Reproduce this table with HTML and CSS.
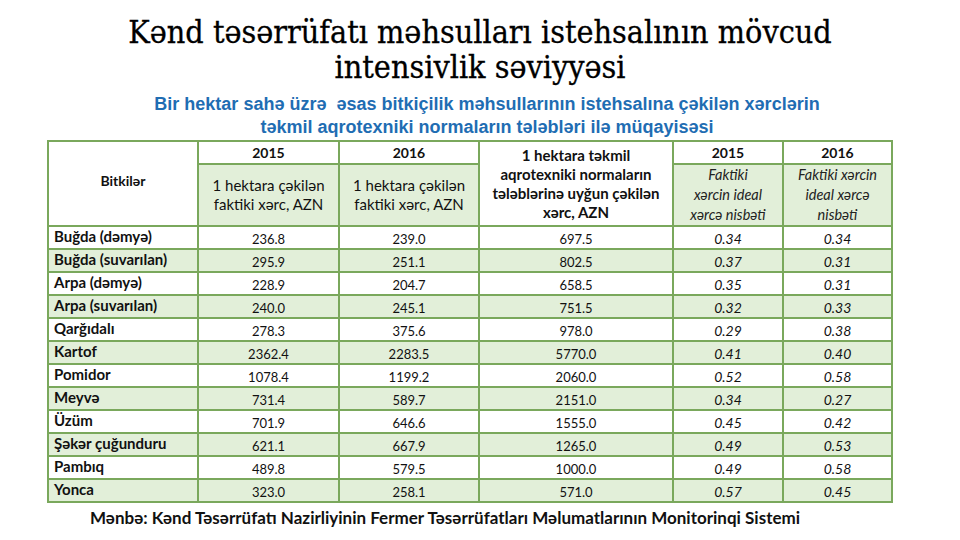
FILE: index.html
```html
<!DOCTYPE html>
<html lang="az">
<head>
<meta charset="utf-8">
<title>Kənd təsərrüfatı məhsulları istehsalının mövcud intensivlik səviyyəsi</title>
<link rel="stylesheet" href="styles.css">
</head>
<body>
<div class="slide">
  <h1 class="title">Kənd təsərrüfatı məhsulları istehsalının mövcud<br>intensivlik səviyyəsi</h1>
  <p class="subtitle">Bir hektar sahə üzrə&nbsp; əsas bitkiçilik məhsullarının istehsalına çəkilən xərclərin<br>təkmil aqrotexniki normaların tələbləri ilə müqayisəsi</p>
  <table class="data">
    <colgroup>
      <col class="c1"><col class="c2"><col class="c3"><col class="c4"><col class="c5"><col class="c6">
    </colgroup>
    <thead>
      <tr class="h1">
        <th rowspan="2" class="crop-head">Bitkilər</th>
        <th>2015</th>
        <th>2016</th>
        <th rowspan="2" class="norm-head">1 hektara təkmil<br>aqrotexniki normaların<br>tələblərinə uyğun çəkilən<br>xərc, AZN</th>
        <th>2015</th>
        <th>2016</th>
      </tr>
      <tr class="h2">
        <td class="sub">1 hektara çəkilən<br>faktiki xərc, AZN</td>
        <td class="sub">1 hektara çəkilən<br>faktiki xərc, AZN</td>
        <td class="sub ital">Faktiki<br>xərcin ideal<br>xərcə nisbəti</td>
        <td class="sub ital">Faktiki xərcin<br>ideal xərcə<br>nisbəti</td>
      </tr>
    </thead>
    <tbody>
      <tr><th>Buğda (dəmyə)</th><td>236.8</td><td>239.0</td><td>697.5</td><td class="r">0.34</td><td class="r">0.34</td></tr>
      <tr class="g"><th>Buğda (suvarılan)</th><td>295.9</td><td>251.1</td><td>802.5</td><td class="r">0.37</td><td class="r">0.31</td></tr>
      <tr><th>Arpa (dəmyə)</th><td>228.9</td><td>204.7</td><td>658.5</td><td class="r">0.35</td><td class="r">0.31</td></tr>
      <tr class="g"><th>Arpa (suvarılan)</th><td>240.0</td><td>245.1</td><td>751.5</td><td class="r">0.32</td><td class="r">0.33</td></tr>
      <tr><th>Qarğıdalı</th><td>278.3</td><td>375.6</td><td>978.0</td><td class="r">0.29</td><td class="r">0.38</td></tr>
      <tr class="g"><th>Kartof</th><td>2362.4</td><td>2283.5</td><td>5770.0</td><td class="r">0.41</td><td class="r">0.40</td></tr>
      <tr><th>Pomidor</th><td>1078.4</td><td>1199.2</td><td>2060.0</td><td class="r">0.52</td><td class="r">0.58</td></tr>
      <tr class="g"><th>Meyvə</th><td>731.4</td><td>589.7</td><td>2151.0</td><td class="r">0.34</td><td class="r">0.27</td></tr>
      <tr><th>Üzüm</th><td>701.9</td><td>646.6</td><td>1555.0</td><td class="r">0.45</td><td class="r">0.42</td></tr>
      <tr class="g"><th>Şəkər çuğunduru</th><td>621.1</td><td>667.9</td><td>1265.0</td><td class="r">0.49</td><td class="r">0.53</td></tr>
      <tr><th>Pambıq</th><td>489.8</td><td>579.5</td><td>1000.0</td><td class="r">0.49</td><td class="r">0.58</td></tr>
      <tr class="g"><th>Yonca</th><td>323.0</td><td>258.1</td><td>571.0</td><td class="r">0.57</td><td class="r">0.45</td></tr>
    </tbody>
  </table>
  <p class="source">Mənbə: Kənd Təsərrüfatı Nazirliyinin Fermer Təsərrüfatları Məlumatlarının Monitorinqi Sistemi</p>
</div>
</body>
</html>
```
FILE: styles.css
```css
html, body {
  margin: 0;
  padding: 0;
  background: #ffffff;
}

.slide {
  width: 960px;
  height: 540px;
  display: flex;
  flex-direction: column;
  align-items: flex-start;
  overflow: hidden;
}

.title {
  align-self: stretch;
  margin: 15px 0 0 0;
  font-family: "DejaVu Serif Condensed", "DejaVu Serif", serif;
  font-weight: normal;
  font-size: 32px;
  line-height: 35px;
  text-align: center;
  color: #000000;
  -webkit-text-stroke: 0.3px #000000;
}

.subtitle {
  align-self: stretch;
  margin: 8px 0 0 14px;
  font-family: "Liberation Sans", Arial, sans-serif;
  font-weight: bold;
  font-size: 18px;
  line-height: 23px;
  text-align: center;
  color: #1f6db3;
}

.data {
  margin: 1px 0 0 47px;
  border-collapse: collapse;
  border: 2px solid #7aa85c;
  table-layout: fixed;
  width: 844px;
  font-family: Lato, "Open Sans", sans-serif;
  font-size: 13px;
  color: #111111;
}

.c1 { width: 150px; }
.c2 { width: 141px; }
.c3 { width: 140px; }
.c4 { width: 194px; }
.c5 { width: 110px; }
.c6 { width: 109px; }

.data th,
.data td {
  border: 2px solid #7aa85c;
  padding: 0;
  text-align: center;
  vertical-align: middle;
}

.data thead th {
  font-weight: bold;
  font-size: 14px;
  background: #ffffff;
}

.h1 { height: 23px; }
.h2 { height: 56px; }

.data thead th.crop-head {
  padding-bottom: 6px;
}

.data thead th.norm-head {
  font-size: 15px;
  line-height: 19px;
  padding-top: 1px;
}

.sub {
  background: #e2efd9;
  font-size: 15px;
  line-height: 19px;
  padding-top: 6px;
}

.sub.ital {
  font-style: italic;
  font-size: 14.5px;
  line-height: 20px;
  padding-top: 0;
  color: #222222;
}

.data tbody tr {
  height: 23px;
  background: #ffffff;
}

.data tbody tr.g {
  background: #e2efd9;
}

.data tbody th {
  text-align: left;
  font-weight: bold;
  font-size: 15px;
  padding: 0 0 3px 5px;
  white-space: nowrap;
}

.data tbody td {
  padding-top: 2px;
}

.data tbody td.r {
  font-style: italic;
  font-size: 14px;
}

.source {
  margin: 4px 0 0 90px;
  font-family: Lato, "Open Sans", sans-serif;
  font-weight: bold;
  font-size: 17px;
  line-height: 22px;
  color: #111111;
}
```
